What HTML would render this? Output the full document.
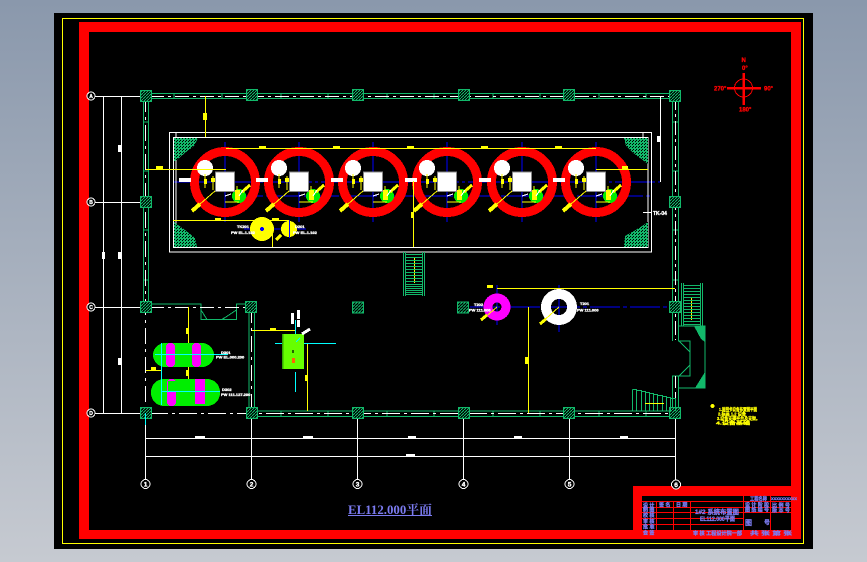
<!DOCTYPE html>
<html><head><meta charset="utf-8"><title>EL112.000平面</title>
<style>
html,body{margin:0;padding:0;width:867px;height:562px;overflow:hidden;background:#9aa6b8}
svg{display:block;position:absolute;left:0;top:0;shape-rendering:crispEdges}
text{font-family:"Liberation Sans","Noto Sans CJK SC",sans-serif}
.w text{stroke:#fff;stroke-width:.35}
.y text{stroke:#ff0;stroke-width:.3}
.b text{stroke:#7b7bf0;stroke-width:.3}
.r text{stroke:#f00;stroke-width:.3}
</style></head><body>
<svg width="867" height="562" viewBox="0 0 867 562" xmlns="http://www.w3.org/2000/svg">
<defs>
<linearGradient id="bg" x1="0" y1="0" x2="0" y2="1"><stop offset="0" stop-color="#8a98ac"/><stop offset="1" stop-color="#c6cad1"/></linearGradient>
<pattern id="dots" width="3" height="3" patternUnits="userSpaceOnUse"><rect width="3" height="3" fill="#12b86a"/><rect x="2" y="0" width="1" height="1" fill="#000"/><rect x="0" y="2" width="1" height="1" fill="#000"/></pattern>
<pattern id="hatch" width="3" height="3" patternUnits="userSpaceOnUse"><rect width="3" height="3" fill="#000"/><path d="M0 3L3 0" stroke="#12b86a" stroke-width="1"/></pattern>
<g id="col"><rect x="-5.500" y="-5.500" width="11" height="11" fill="url(#hatch)" stroke="#12b86a" stroke-width="1"/></g>
<g id="tank">
<path d="M0-40V40" stroke="#0000ff" stroke-width="1"/>
<circle r="30.500" fill="none" stroke="#ff0000" stroke-width="9"/>
<circle cx="-20" cy="-14" r="8" fill="#fff"/>
<circle cx="14" cy="14" r="7" fill="#00ee00"/>
<rect x="-9.500" y="-10" width="19" height="19.500" fill="#fff" stroke="#888" stroke-width="1"/>
<path d="M-10 9L-33 29" stroke="#ff0" stroke-width="1"/>
<path d="M-33 29L-25 22" stroke="#ff0" stroke-width="4"/>
<path d="M-20-8V6M-12-6V8M0 20H14M12 12V4" stroke="#ff0" stroke-width="1"/>
<path d="M-14-4h4v4h-4zM-21-3h3v5h-3zM10 8h5v10h-5z" fill="#ff0"/>
<path d="M17 10L25 3" stroke="#ff0" stroke-width="3"/>
<path d="M0 14L6 12M14 14L18 8" stroke="#fff" stroke-width="1"/>
</g>
</defs>
<rect width="867" height="562" fill="url(#bg)"/>
<rect x="54" y="13" width="759" height="536" fill="#000"/>
<rect x="62.500" y="18.500" width="741" height="525" fill="none" stroke="#ffff00"/>
<path d="M79 22H801V539H79ZM89 32V530H633V486H791V32Z" fill="#ff0000" fill-rule="evenodd"/>
<path d="M633 530V539H791V530Z" fill="#ff0000"/>

<!-- blue centre lines -->
<g stroke="#0000ff" stroke-width="1" fill="none">
<path d="M174 182H660" stroke-dasharray="40 3 3 3"/>
<path d="M235 196H650" stroke-dasharray="28 3 4 3"/>
<path d="M470 307H670" stroke-dasharray="30 3 4 3"/>
<path d="M497 285V325M559 285V332"/>
<path d="M244 229H306"/>
</g>
<!-- outer equipment frame -->
<g fill="none" stroke="#fff" stroke-width="1">
<rect x="169.500" y="132.500" width="482" height="119.500"/>
<rect x="173.500" y="137.500" width="474.500" height="110"/>
<path d="M176 132V247M643 132V137"/>
</g>
<polygon points="174,138 198,138 194,146 186,152 179,158 174,162" fill="url(#dots)"/>
<polygon points="174,222 185,230 195,238 197,247 174,247" fill="url(#dots)"/>
<polygon points="624,138 648,138 648,164 640,158 632,152 626,146" fill="url(#dots)"/>
<polygon points="648,222 648,247 624,247 625,236 634,231 642,226" fill="url(#dots)"/>

<!-- walls -->
<g fill="none" stroke="#12b86a" stroke-width="1">
<path d="M145 93.500H675M145 98.500H672.500V341M678.500 93.500V341H690V376H672.500V411M678.500 376V411"/>
<path d="M143.500 96V307M148.500 96V304H201V319.500H236.500V304H249V411H675M254.500 304V416.500H675"/>
<path d="M201 310L207 319.500M236.500 310L222 319.500M251 304H237"/>
<path d="M174 93.500V98.500M222 93.500V98.500M281 93.500V98.500M328 93.500V98.500M387 93.500V98.500M434 93.500V98.500M493 93.500V98.500M540 93.500V98.500M599 93.500V98.500M646 93.500V98.500M143 122H148M143 171H148M143 230H148M143 280H148M672 122H678M672 171H678M672 230H678M672 280H678M281 411V416M328 411V416M387 411V416M434 411V416M493 411V416M540 411V416M599 411V416M646 411V416"/>
<path d="M679 326H705V388H679M679 341L690 352M679 376L690 365"/>
</g>
<polygon points="694,326 705,326 705,342 701,339" fill="#12b86a"/>
<polygon points="695,388 705,388 705,372 700,380" fill="#12b86a"/>
<!-- grid lines -->
<g stroke="#fff" stroke-width="1" fill="none">
<path d="M95 96.500H145M95 202.500H145M95 307.500H145M95 413.500H145"/>
<path d="M150 96.500H672" stroke-dasharray="14 4 3 4"/>
<path d="M150 307.500H250" stroke-dasharray="14 4 3 4"/>
<path d="M150 413.500H672" stroke-dasharray="18 4 3 4"/>
<path d="M145.500 96V413" stroke-dasharray="16 5 3 5"/>
<path d="M145.500 413V480"/>
<path d="M251.500 307V413" stroke-dasharray="16 5 3 5"/>
<path d="M251.500 413V480M357.500 413V480M463.500 413V480M569.500 413V480"/>
<path d="M675.500 96V340" stroke-dasharray="14 4 3 4"/>
<path d="M675.500 376V413" stroke-dasharray="12 4"/>
<path d="M675.500 413V480"/>
<path d="M103.500 96V413M121.500 96V413"/>
<path d="M145 438.500H675M145 456.500H675"/>
<path d="M643 212.500H652"/>
<path d="M660.500 96V182"/>
</g>
<g fill="#fff">
<rect x="118" y="145" width="4" height="7"/><rect x="118" y="358" width="4" height="7"/><rect x="118" y="252" width="4" height="7"/><rect x="102" y="252" width="3" height="7"/>
<rect x="195" y="436" width="10" height="3"/><rect x="303" y="436" width="10" height="3"/><rect x="408" y="436" width="8" height="3"/><rect x="514" y="436" width="8" height="3"/><rect x="620" y="436" width="8" height="3"/><rect x="406" y="454" width="9" height="3"/>
<rect x="657" y="136" width="4" height="6"/>
</g>
<!-- columns -->
<use href="#col" x="146" y="96"/><use href="#col" x="252" y="95"/><use href="#col" x="358" y="95"/><use href="#col" x="464" y="95"/><use href="#col" x="569" y="95"/><use href="#col" x="675" y="96"/>
<use href="#col" x="146" y="202"/><use href="#col" x="675" y="202"/>
<use href="#col" x="146" y="307"/><use href="#col" x="251" y="307"/><use href="#col" x="675" y="307"/>
<use href="#col" x="146" y="413"/><use href="#col" x="252" y="413"/><use href="#col" x="358" y="413"/><use href="#col" x="464" y="413"/><use href="#col" x="569" y="413"/><use href="#col" x="675" y="413"/>
<use href="#col" x="358" y="307.500"/><use href="#col" x="463" y="307.500"/>

<!-- tanks -->
<use href="#tank" x="225" y="182"/><use href="#tank" x="299" y="182"/><use href="#tank" x="373" y="182"/><use href="#tank" x="447" y="182"/><use href="#tank" x="522" y="182"/><use href="#tank" x="596" y="182"/>
<!-- tank labels -->
<g class="w" fill="#fff" font-size="5" font-weight="bold">
<rect x="179" y="178" width="12" height="4"/><rect x="256" y="178" width="12" height="4"/><rect x="331" y="178" width="12" height="4"/><rect x="405" y="178" width="12" height="4"/><rect x="479" y="178" width="12" height="4"/><rect x="553" y="178" width="12" height="4"/>
<text x="653" y="215" font-size="5">TK-04</text>
</g>
<!-- yellow dims -->
<g stroke="#ffff00" stroke-width="1" fill="none">
<path d="M205.500 96V137"/>
<path d="M226 148.500H596"/>
<path d="M146 169.500H226M596 169.500H648"/>
<path d="M173 220.500H290"/>
<path d="M272.500 232V247M413.500 181V247"/>
<path d="M497 288.500H675M528.500 307V413M252 330.500H295"/>
<path d="M188.500 307V382M307.500 344V411"/>
<path d="M146 370.500H162"/>
<path d="M414.500 258V283M691.500 297V320M645 403.500H664"/>
</g>
<g fill="#ffff00">
<rect x="203" y="113" width="4" height="7"/><rect x="156" y="166" width="7" height="3"/>
<rect x="259" y="146" width="7" height="3"/><rect x="333" y="146" width="7" height="3"/><rect x="407" y="146" width="7" height="3"/><rect x="481" y="146" width="7" height="3"/><rect x="555" y="146" width="7" height="3"/>
<rect x="622" y="166" width="6" height="3"/><rect x="215" y="218" width="6" height="3"/><rect x="272" y="218" width="7" height="3"/>
<rect x="411" y="212" width="3" height="6"/><rect x="525" y="357" width="4" height="7"/><rect x="186" y="328" width="3" height="6"/><rect x="186" y="370" width="3" height="6"/>
<rect x="151" y="367" width="5" height="3"/><rect x="270" y="328" width="6" height="3"/><rect x="305" y="375" width="3" height="6"/><rect x="487" y="285" width="6" height="3"/>
<circle cx="262" cy="229" r="12"/><circle cx="289" cy="229" r="8"/>
</g>
<circle cx="262" cy="229" r="2" fill="#0000ff"/><path d="M289.500 220V238" stroke="#0000ff"/>
<path d="M276 240L281 235" stroke="#ff0" stroke-width="3"/>
<g class="w" fill="#fff" font-size="4" font-weight="bold"><text x="237" y="228">TK201</text><text x="231" y="234">PW EL.1.102</text><text x="295" y="228">D201</text><text x="293" y="234">PW EL.1.102</text></g>

<!-- pump donuts -->
<circle cx="497" cy="307" r="9" fill="none" stroke="#ff00ff" stroke-width="9"/>
<circle cx="559" cy="307" r="13" fill="none" stroke="#fff" stroke-width="10"/>
<path d="M497 307L482 320M559 307L541 323" stroke="#ff0" stroke-width="1"/>
<path d="M481 320L487 315M540 324L546 319" stroke="#ff0" stroke-width="3"/>
<g class="w" fill="#fff" font-size="4" font-weight="bold"><text x="474" y="306">T202</text><text x="469" y="311.500">PW 111.000</text><text x="580" y="305">T201</text><text x="577" y="311.500">PW 111.000</text></g>

<!-- stairs -->
<g stroke="#12b86a" fill="none">
<path d="M403.500 252V296M405.500 252V296M422.500 252V296M424.500 252V296"/>
<path d="M406 254.500H422M406 257.500H422M406 260.500H422M406 263.500H422M406 266.500H422M406 269.500H422M406 272.500H422M406 275.500H422M406 278.500H422M406 281.500H422M406 284.500H422M406 286.500H422M406 288.500H422M406 290.500H422M406 292.500H422M406 294.500H422"/>
<path d="M681.500 283V326M683.500 283V326M700.500 283V326M702.500 283V326"/>
<path d="M683 285.500H700M683 288.500H700M683 291.500H700M683 294.500H700M683 297.500H700M683 300.500H700M683 303.500H700M683 306.500H700M683 309.500H700M683 312.500H700M683 315.500H700M683 318.500H700M683 321.500H700M683 324.500H700"/>
<path d="M632.500 389.500H636.500V411M632.500 389.500V411M636.500 390.500H641.500V411M641.500 391.500H645.500V411M645.500 392.500H649.500V411M649.500 393.500H653.500V411M653.500 394.500H657.500V411M657.500 395.500H662.500V411M662.500 396.500H666.500V411M666.500 397.500H670.500V411M670.500 398.500H675.500V411"/>
</g>
<path d="M645 403.500H664" stroke="#ff0"/>
<!-- horizontal drums -->
<rect x="153" y="343" width="61" height="24" rx="12" fill="#00ee00"/>
<rect x="151" y="379" width="69" height="27" rx="13" fill="#00ee00"/>
<rect x="166" y="343" width="9" height="24" rx="4" fill="#ff00ff"/><rect x="192" y="343" width="9" height="24" rx="4" fill="#ff00ff"/>
<rect x="167" y="379" width="9" height="27" rx="4" fill="#ff00ff"/><rect x="195" y="379" width="10" height="25" fill="#ff00ff"/>
<path d="M168 381H195V401H176V391H168Z" fill="#00ee00"/>
<path d="M155 354.500H228M162 391.500H220M161.500 343V405M295.500 320V334M295.500 372V392M275 343.500H336" stroke="#00ffff" stroke-width="1" fill="none"/>
<path d="M145.500 413V425" stroke="#00ffff"/>
<g class="w" fill="#fff" font-size="4" font-weight="bold"><text x="221" y="354">D301</text><text x="216" y="358.500">PW EL.000.200</text><text x="222" y="391">D302</text><text x="221" y="396">PW 111.127.200</text></g>
<!-- green box -->
<rect x="282" y="334" width="22" height="35" fill="#66ff00"/>
<rect x="282" y="334" width="1.500" height="35" fill="#33aa00"/>
<rect x="292" y="350" width="2" height="3" fill="#226600"/>
<rect x="292" y="358" width="3" height="5" fill="#ff6600"/>
<g fill="#fff"><rect x="291" y="313" width="3" height="11"/><rect x="297" y="310" width="3" height="9"/><rect x="297" y="320" width="3" height="7"/></g>
<path d="M302 334L310 329" stroke="#fff" stroke-width="3"/>
<path d="M296 342L300 338" stroke="#0ff"/>

<!-- bubbles -->
<g fill="#000" stroke="#fff" stroke-width="1"><circle cx="91" cy="96" r="4"/><circle cx="91" cy="202" r="4"/><circle cx="91" cy="307" r="4"/><circle cx="91" cy="413" r="4"/>
<circle cx="145.500" cy="484" r="4.500"/><circle cx="251.500" cy="484" r="4.500"/><circle cx="357.500" cy="484" r="4.500"/><circle cx="463.500" cy="484" r="4.500"/><circle cx="569.500" cy="484" r="4.500"/><circle cx="676" cy="484.500" r="4.500"/></g>
<g class="w" fill="#fff" font-size="6.500" font-weight="bold" text-anchor="middle"><text x="145.500" y="486.500">1</text><text x="251.500" y="486.500">2</text><text x="357.500" y="486.500">3</text><text x="463.500" y="486.500">4</text><text x="569.500" y="486.500">5</text><text x="676" y="487">6</text></g>
<g class="w" fill="#fff" font-size="5" font-weight="bold" text-anchor="middle"><text x="91" y="98">A</text><text x="91" y="204">B</text><text x="91" y="309">C</text><text x="91" y="415">D</text></g>

<!-- compass -->
<g stroke="#ff0000" fill="none"><circle cx="743.500" cy="88" r="9"/><path d="M727 88H761M743.500 73V105" stroke-width="2.500"/></g>
<g class="r" fill="#ff0000" font-size="6" font-weight="bold"><text x="741.500" y="62">N</text><text x="742" y="70">0°</text><text x="714" y="90.500">270°</text><text x="764" y="90.500">90°</text><text x="739" y="111.500">180°</text></g>
<!-- notes -->
<circle cx="712.500" cy="406" r="2" fill="#ff0"/>
<g class="y" fill="#ffff00" font-size="4.500" font-weight="bold"><text x="719" y="411" textLength="38" lengthAdjust="spacingAndGlyphs">1.说明书设备布置图平面</text><text x="718" y="415.500" textLength="28" lengthAdjust="spacingAndGlyphs">2.标高 1.2 设备</text><text x="717" y="420" textLength="43" lengthAdjust="spacingAndGlyphs">3.设备支撑平台及支架。</text><text x="716" y="424.500" textLength="34" lengthAdjust="spacingAndGlyphs">4.设备基础</text></g>

<!-- title -->
<text x="348" y="514" font-size="12.500" font-weight="bold" fill="#7b7bf0" textLength="84" lengthAdjust="spacingAndGlyphs" style="font-family:'Liberation Serif','Noto Serif CJK SC',serif">EL112.000平面</text>
<path d="M348 515.500H432" stroke="#7b7bf0"/>

<!-- title block -->
<rect x="642" y="496" width="149" height="34" fill="#000"/>
<g stroke="#ff0000" stroke-width="1" fill="none">
<path d="M642 501.500H791M642 507.500H743M642 512.500H743M642 518.500H743M642 524.500H743M743 507.500H791M743 512.500H791"/>
<path d="M656.500 502V530M673.500 502V530M690.500 502V530M743.500 496V530M770.500 496V530"/>
</g>
<g class="b" fill="#7b7bf0" font-weight="bold" font-size="5">
<text x="643" y="507">设 计</text><text x="659" y="506.500">签 名</text><text x="676" y="506.500">日 期</text>
<text x="643" y="511.500">制 图</text><text x="643" y="517">校 核</text><text x="643" y="523">审 核</text><text x="643" y="528.500">批 准</text><text x="643" y="534.500">会 签</text>
<text x="695" y="514" font-size="6.500" textLength="44" lengthAdjust="spacingAndGlyphs">1#2 系统布置图</text>
<text x="700" y="521" font-size="6" textLength="35" lengthAdjust="spacingAndGlyphs">EL112.000平面</text>
<text x="750" y="500.500" textLength="17" lengthAdjust="spacingAndGlyphs">工程名称</text><text x="771" y="500" font-size="4.500" textLength="26" lengthAdjust="spacingAndGlyphs">xxxxxxxxxx</text>
<text x="745" y="506.500" textLength="24" lengthAdjust="spacingAndGlyphs">设 计 阶 段</text><text x="745" y="511.500" textLength="24" lengthAdjust="spacingAndGlyphs">图 纸 编 号</text><text x="772" y="507" textLength="18" lengthAdjust="spacingAndGlyphs">比 例 号</text><text x="772" y="512" textLength="18" lengthAdjust="spacingAndGlyphs">版 本 号</text>
<text x="745" y="525" font-size="7">图</text><text x="764" y="524.500" font-size="6">号</text>
<text x="693" y="535" textLength="49" lengthAdjust="spacingAndGlyphs">审 核 工程设计院一部</text><text x="750" y="535" textLength="42" lengthAdjust="spacingAndGlyphs">共 张 第 张</text>
</g>
</svg>
</body></html>
